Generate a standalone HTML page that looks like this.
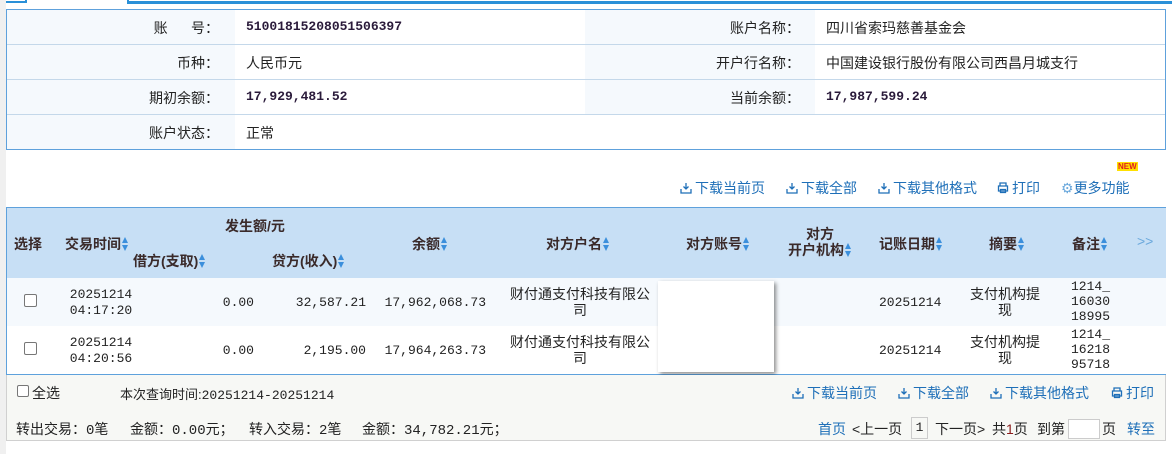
<!DOCTYPE html>
<html><head><meta charset="utf-8"><style>
*{margin:0;padding:0;box-sizing:border-box}
body{width:1172px;height:454px;background:#fff;font-family:"Liberation Sans","Noto Sans CJK SC",sans-serif;font-size:13px;color:#222;position:relative;overflow:hidden}
.a{position:absolute;white-space:nowrap}
.mono{font-family:"Liberation Mono","Noto Sans CJK SC",monospace}
.b{font-weight:bold;color:#2a1a3a}
.lnk{color:#1e6fb8}
.th{font-weight:bold;color:#3a2a2a;font-size:14px}
.ar{display:inline-block;vertical-align:middle;margin-left:1px;width:7px;height:14px;position:relative;top:-1px}
.ar:before{content:"";position:absolute;left:0;top:0;border-left:3.5px solid transparent;border-right:3.5px solid transparent;border-bottom:6px solid #3b8fdc}
.ar:after{content:"";position:absolute;left:0;top:8px;border-left:3.5px solid transparent;border-right:3.5px solid transparent;border-top:6px solid #3b8fdc}
.r{text-align:right}.c{text-align:center}
.dl{display:inline-block;width:12px;height:12px;vertical-align:-1px;margin-right:3px}
</style></head><body>
<svg width="0" height="0" style="position:absolute"><defs>
<symbol id="d" viewBox="0 0 12 12"><path d="M6 1v6M3.5 4.5L6 7l2.5-2.5M1 7v4h10V7" fill="none" stroke="#1e6fb8" stroke-width="1.3"/></symbol>
<symbol id="p" viewBox="0 0 12 12"><path d="M3 4V1h6v3M1.5 4h9v5h-9zM3.5 7.5h5v3h-5z" fill="none" stroke="#1e6fb8" stroke-width="1.3"/></symbol>
</defs></svg>
<div class="a" style="left:0;top:0;width:6px;height:454px;background:#f0f0f0"></div>
<div class="a" style="left:6px;top:0;width:21px;height:3px;border-right:2px solid #2a90d8;border-bottom:2px solid #2a90d8"></div>
<div class="a" style="left:127px;top:0;width:1045px;height:4px;border-left:2px solid #2a90d8;border-bottom:3px solid #2a90d8"></div>

<div class="a" style="left:6px;top:9px;width:1160px;height:141px;border:1px solid #5ea1dc;background:#fff"></div>
<div class="a" style="left:7px;top:10px;width:228px;height:139px;background:#f5f9fd"></div>
<div class="a" style="left:585px;top:10px;width:230px;height:104px;background:#f5f9fd"></div>
<div class="a" style="left:7px;top:44px;width:1158px;height:1px;background:#c4d8ea"></div>
<div class="a" style="left:7px;top:79px;width:1158px;height:1px;background:#c4d8ea"></div>
<div class="a" style="left:7px;top:114px;width:1158px;height:1px;background:#c4d8ea"></div>

<div class="a r" style="left:7px;width:212px;top:18px;font-size:14px">账&nbsp;&nbsp;&nbsp;&nbsp;&nbsp;&nbsp;号：</div>
<div class="a r" style="left:7px;width:212px;top:53px;font-size:14px">币种：</div>
<div class="a r" style="left:7px;width:212px;top:88px;font-size:14px">期初余额：</div>
<div class="a r" style="left:7px;width:212px;top:123px;font-size:14px">账户状态：</div>
<div class="a mono b" style="left:246px;top:19px">51001815208051506397</div>
<div class="a" style="left:246px;top:53px;font-size:14px">人民币元</div>
<div class="a mono b" style="left:246px;top:89px">17,929,481.52</div>
<div class="a" style="left:246px;top:123px;font-size:14px">正常</div>
<div class="a r" style="left:585px;width:215px;top:18px;font-size:14px">账户名称：</div>
<div class="a r" style="left:585px;width:215px;top:53px;font-size:14px">开户行名称：</div>
<div class="a r" style="left:585px;width:215px;top:88px;font-size:14px">当前余额：</div>
<div class="a" style="left:826px;top:18px;font-size:14px">四川省索玛慈善基金会</div>
<div class="a" style="left:826px;top:53px;font-size:14px">中国建设银行股份有限公司西昌月城支行</div>
<div class="a mono b" style="left:826px;top:89px">17,987,599.24</div>

<div class="a" style="left:1117px;top:162px;font-size:8px;font-weight:bold;color:#e02020;background:#ffe000;line-height:9px;padding:0 1px">NEW</div>
<div class="a lnk" style="left:680px;top:178px;font-size:14px"><svg class="dl"><use href="#d"/></svg>下载当前页</div>
<div class="a lnk" style="left:786px;top:178px;font-size:14px"><svg class="dl"><use href="#d"/></svg>下载全部</div>
<div class="a lnk" style="left:878px;top:178px;font-size:14px"><svg class="dl"><use href="#d"/></svg>下载其他格式</div>
<div class="a lnk" style="left:997px;top:178px;font-size:14px"><svg class="dl"><use href="#p"/></svg>打印</div>
<div class="a lnk" style="left:1061px;top:178px;font-size:14px"><span style="color:#6aa8dc">⚙</span>更多功能</div>

<div class="a" style="left:6px;top:207px;width:1160px;height:168px;border:1px solid #5ea1dc;border-right:none"></div>
<div class="a" style="left:7px;top:208px;width:1159px;height:70px;background:#c7dff5"></div>
<div class="a" style="left:7px;top:278px;width:1159px;height:48px;background:#f5f9fd"></div>
<div class="a th" style="left:14px;top:234px">选择</div>
<div class="a th" style="left:65px;top:234px">交易时间<i class="ar"></i></div>
<div class="a th" style="left:225px;top:216px">发生额/元</div>
<div class="a th" style="left:133px;top:251px">借方(支取)<i class="ar"></i></div>
<div class="a th" style="left:272px;top:251px">贷方(收入)<i class="ar"></i></div>
<div class="a th" style="left:412px;top:234px">余额<i class="ar"></i></div>
<div class="a th" style="left:546px;top:234px">对方户名<i class="ar"></i></div>
<div class="a th" style="left:686px;top:234px">对方账号<i class="ar"></i></div>
<div class="a th c" style="left:780px;width:80px;top:226px;line-height:16px">对方<br>开户机构<i class="ar"></i></div>
<div class="a th" style="left:879px;top:234px">记账日期<i class="ar"></i></div>
<div class="a th" style="left:989px;top:234px">摘要<i class="ar"></i></div>
<div class="a th" style="left:1072px;top:234px">备注<i class="ar"></i></div>
<div class="a" style="left:1137px;top:233px;color:#6aa8dc;font-size:14px">&gt;&gt;</div>

<div class="a" style="left:24px;top:294px;width:13px;height:13px;border:1px solid #777;border-radius:2px;background:#fff"></div>
<div class="a" style="left:24px;top:342px;width:13px;height:13px;border:1px solid #777;border-radius:2px;background:#fff"></div>
<div class="a mono c" style="left:60px;width:82px;top:287px;line-height:16px">20251214<br>04:17:20</div>
<div class="a mono c" style="left:60px;width:82px;top:335px;line-height:16px">20251214<br>04:20:56</div>
<div class="a mono r" style="left:150px;width:104px;top:295px">0.00</div>
<div class="a mono r" style="left:150px;width:104px;top:343px">0.00</div>
<div class="a mono r" style="left:250px;width:116px;top:295px">32,587.21</div>
<div class="a mono r" style="left:250px;width:116px;top:343px">2,195.00</div>
<div class="a mono r" style="left:370px;width:116px;top:295px">17,962,068.73</div>
<div class="a mono r" style="left:370px;width:116px;top:343px">17,964,263.73</div>
<div class="a c" style="left:500px;width:160px;top:286px;line-height:16px;font-size:14px">财付通支付科技有限公<br>司</div>
<div class="a c" style="left:500px;width:160px;top:334px;line-height:16px;font-size:14px">财付通支付科技有限公<br>司</div>
<div class="a mono" style="left:879px;top:295px">20251214</div>
<div class="a mono" style="left:879px;top:343px">20251214</div>
<div class="a c" style="left:960px;width:90px;top:286px;line-height:16px;font-size:14px">支付机构提<br>现</div>
<div class="a c" style="left:960px;width:90px;top:334px;line-height:16px;font-size:14px">支付机构提<br>现</div>
<div class="a mono r" style="left:1050px;width:60px;top:279px;line-height:15px">1214_<br>16030<br>18995</div>
<div class="a mono r" style="left:1050px;width:60px;top:327px;line-height:15px">1214_<br>16218<br>95718</div>
<div class="a" style="left:658px;top:281px;width:116px;height:91px;background:#fff;box-shadow:2px 2px 4px rgba(0,0,0,.45)"></div>

<div class="a" style="left:6px;top:375px;width:1160px;height:66px;background:#f7f8f5;border:1px solid #d0d0d0;border-top:none"></div>
<div class="a" style="left:17px;top:385px;width:12px;height:12px;border:1px solid #777;border-radius:2px;background:#fff"></div>
<div class="a" style="left:32px;top:383px;font-size:14px">全选</div>
<div class="a" style="left:120px;top:384px">本次查询时间:<span class="mono">20251214-20251214</span></div>
<div class="a lnk" style="left:792px;top:383px;font-size:14px"><svg class="dl"><use href="#d"/></svg>下载当前页</div>
<div class="a lnk" style="left:898px;top:383px;font-size:14px"><svg class="dl"><use href="#d"/></svg>下载全部</div>
<div class="a lnk" style="left:990px;top:383px;font-size:14px"><svg class="dl"><use href="#d"/></svg>下载其他格式</div>
<div class="a lnk" style="left:1111px;top:383px;font-size:14px"><svg class="dl"><use href="#p"/></svg>打印</div>
<div class="a" style="left:16px;top:419px;font-size:14px">转出交易：<span class="mono">0</span>笔</div>
<div class="a" style="left:130px;top:419px;font-size:14px">金额：<span class="mono">0.00</span>元；</div>
<div class="a" style="left:249px;top:419px;font-size:14px">转入交易：<span class="mono">2</span>笔</div>
<div class="a" style="left:362px;top:419px;font-size:14px">金额：<span class="mono">34,782.21</span>元；</div>
<div class="a lnk" style="left:818px;top:419px;font-size:14px">首页</div>
<div class="a" style="left:852px;top:419px;font-size:14px">&lt;上一页</div>
<div class="a" style="left:911px;top:417px;width:17px;height:22px;border:1px solid #ccc;font-size:13px;text-align:center;line-height:20px;font-family:'Liberation Mono',monospace">1</div>
<div class="a" style="left:935px;top:419px;font-size:14px">下一页&gt;</div>
<div class="a" style="left:992px;top:419px;font-size:14px">共<span style="color:#8a1a1a">1</span>页</div>
<div class="a" style="left:1037px;top:419px;font-size:14px">到第</div>
<div class="a" style="left:1068px;top:419px;width:32px;height:20px;border:1px solid #ccc;background:#fff"></div>
<div class="a" style="left:1102px;top:419px;font-size:14px">页</div>
<div class="a lnk" style="left:1127px;top:419px;font-size:14px">转至</div>
</body></html>
